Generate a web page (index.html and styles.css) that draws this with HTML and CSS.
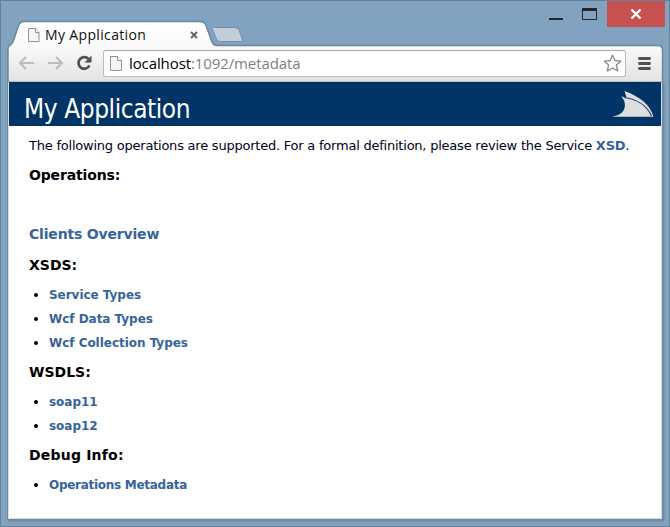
FILE: index.html
```html
<!DOCTYPE html>
<html lang="en">
<head>
<meta charset="utf-8">
<title>My Application</title>
<link rel="stylesheet" href="styles.css">
</head>
<body>
<div class="window">
  <header class="chrome">
    <svg class="frame" width="670" height="82" viewBox="0 0 670 82">
      <defs>
        <linearGradient id="bar" x1="0" y1="22" x2="0" y2="81" gradientUnits="userSpaceOnUse">
          <stop offset="0" stop-color="#fff"/><stop offset=".4" stop-color="#fafafa"/><stop offset="1" stop-color="#e3e3e3"/>
        </linearGradient>
      </defs>
      <path d="M8 82V49Q8 45.500 11 44.500Q12.500 43.500 13.500 40.500L18.500 26Q20 21.500 24 21.500H200Q204.500 21.500 206 25.500L212 42Q213.300 45.500 217 45.500H658Q662.500 45.500 662.500 50V82Z" fill="url(#bar)" stroke="#66869f" stroke-width="1.400"/>
      <path d="M9 81.500H661" stroke="#bdbdbd"/>
      <path d="M213.500 27.500H235Q238 27.500 239 30L242.300 39Q243 41.500 240.500 41.500H220Q217.500 41.500 216.500 39L212.300 29Q211.800 27.500 213.500 27.500Z" fill="#c1ced9" stroke="#7892a8"/>
    </svg>
    <div class="bars">
      <div class="titlebar">
        <div class="tab">
          <svg width="12" height="15" viewBox="0 0 12 15"><path d="M.5.5H7.500L11 4.500V13.500H.5Z" fill="#f5f5f5" stroke="#929292"/><path d="M7.500.5V4.500H11" fill="#fff" stroke="#929292"/></svg>
          <span class="tab-title">My Application</span>
          <svg class="tab-close" width="8" height="8" viewBox="0 0 8 8"><path d="M1 1L7 7M7 1L1 7" stroke="#626262" stroke-width="1.800"/></svg>
        </div>
        <div class="controls">
          <svg width="56" height="26" viewBox="0 0 56 26"><path d="M5 17H19V19H5Z" fill="#262626"/><path d="M38.500 8.500H52.500V18.500H38.500Z" fill="none" stroke="#262626"/><path d="M38 7H53V10H38Z" fill="#262626"/></svg>
          <div class="close"><svg width="12" height="10" viewBox="0 0 12 10"><path d="M1.500.5L10.500 9.500M10.500.5L1.500 9.500" stroke="#fff" stroke-width="2.300"/></svg></div>
        </div>
      </div>
      <div class="toolbar">
        <svg class="nav" width="80" height="20" viewBox="0 0 80 20">
          <path d="M16 10H2M8 4L2 10L8 16" fill="none" stroke="#bdbdbd" stroke-width="2.200"/>
          <path d="M30 10H44M38 4L44 10L38 16" fill="none" stroke="#bdbdbd" stroke-width="2.200"/>
          <path d="M70.500 5.900A5.800 5.800 0 1 0 71.500 12.500" fill="none" stroke="#505050" stroke-width="2.700"/>
          <path d="M73.500 2.500V9.500H66.500Z" fill="#505050"/>
        </svg>
        <div class="address">
          <svg width="12" height="15" viewBox="0 0 12 15"><path d="M.5.5H7.500L11.500 4.500V14.500H.5Z" fill="#f5f5f5" stroke="#929292"/><path d="M7.500.5V4.500H11.500" fill="#fff" stroke="#929292"/></svg>
          <span class="url">localhost<span>:1092/metadata</span></span>
          <svg class="star" width="20" height="19" viewBox="0 0 20 19"><path d="M9.500 1.200L11.900 6.500L17.700 7.200L13.400 11L14.700 16.900L9.500 14L4.300 16.900L5.600 11L1.300 7.200L7.100 6.500Z" fill="#fff" stroke="#8a8a8a" stroke-width="1.300" stroke-linejoin="round"/></svg>
        </div>
        <svg class="menu" width="13" height="13" viewBox="0 0 13 13"><path d="M1.500 1.500H11.500M1.500 6.500H11.500M1.500 11.500H11.500" stroke="#515151" stroke-width="2.900" stroke-linecap="round"/></svg>
      </div>
    </div>
  </header>
  <main class="page">
    <div class="banner">
      <h1>My Application</h1>
      <svg width="42" height="27" viewBox="0 0 42 27"><path d="M0 25.700C5 24.800 10 23 12 18.500C13.800 14.500 13 9.500 9.300 5.500L14.500 6.500L12.500 0C29 6 38 14 41.500 25.700Z" fill="#dedede"/><path d="M12 6.500C25 8 35 15 39.500 25" fill="none" stroke="#174371" stroke-width="1.100"/></svg>
    </div>
    <div class="content">
      <p>The following operations are supported. For a formal definition, please review the Service <a>XSD</a>.</p>
      <h2 class="operations">Operations:</h2>
      <h2 class="clients"><a>Clients Overview</a></h2>
      <h2>XSDS:</h2>
      <ul><li><a>Service Types</a></li><li><a>Wcf Data Types</a></li><li><a>Wcf Collection Types</a></li></ul>
      <h2>WSDLS:</h2>
      <ul><li><a>soap11</a></li><li><a>soap12</a></li></ul>
      <h2 class="debug">Debug Info:</h2>
      <ul class="metadata"><li><a>Operations Metadata</a></li></ul>
    </div>
  </main>
</div>
</body>
</html>
```
FILE: styles.css
```css
* { box-sizing: border-box; }
body { margin: 0; overflow: hidden; }
svg { display: block; flex: none; }
.window {
  width: 670px;
  height: 527px;
  background: #81a3bf;
  box-shadow: inset 0 0 0 1px #66829a;
}
.chrome { display: grid; height: 82px; }
.frame, .bars { grid-area: 1 / 1; }
.titlebar { height: 46px; display: flex; justify-content: space-between; }
.tab {
  width: 172px;
  margin: 25px 0 0 28px;
  height: 20px;
  display: flex;
  align-items: center;
}
.tab-title {
  margin-left: 5px;
  font: 14px/20px "Open Sans", sans-serif;
  letter-spacing: .35px;
  color: #111;
  white-space: nowrap;
}
.tab-close { margin-left: auto; margin-right: 2px; }
.controls { display: flex; margin: 1px 5px 0 0; height: 26px; }
.controls > svg { margin-right: 7px; }
.close {
  width: 58px;
  background: #c75050;
  display: grid;
  place-items: center;
}
.toolbar { height: 36px; display: flex; align-items: flex-start; padding-left: 18px; }
.nav { margin-top: 7px; }
.address {
  margin: 4px 0 0 5px;
  width: 523px;
  height: 27px;
  border: 1px solid #bcbcbc;
  border-top-color: #a9a9a9;
  border-radius: 3px;
  background: #fff;
  display: flex;
  align-items: center;
  padding-left: 6px;
}
.url {
  margin: -1px 0 0 7px;
  font: 15px/24px "Open Sans", sans-serif;
  letter-spacing: -.1px;
  color: #000;
  white-space: nowrap;
}
.url span { color: #808080; }
.star { margin-left: auto; margin-right: 2px; }
.menu { margin: 11px 0 0 12px; }
.page {
  width: 654px;
  height: 437px;
  margin-left: 8px;
  border: solid #d9dde0;
  border-width: 0 1px 1px;
  background: #fff;
  box-shadow: 0 0 0 1px #6c8aa2, 1px 1px 2px 1px #6583a0;
  clip-path: inset(0 -4px -4px -4px);
}
.banner {
  height: 44px;
  background: #036;
  display: flex;
  justify-content: space-between;
  padding: 9px 7px 0 15px;
}
h1 {
  margin: 0;
  font: 26px/36px "DejaVu Sans Condensed", Tahoma, sans-serif;
  letter-spacing: -.43px;
  color: #fff;
  white-space: nowrap;
}
.content {
  padding: 11px 0 0 20px;
  font: 13px/18px "DejaVu Sans", Verdana, sans-serif;
  color: #000;
}
p { margin: 0; white-space: nowrap; color: #002; letter-spacing: -.225px; }
h2 { margin: 11px 0 8px; font-size: 14px; line-height: 20px; font-weight: bold; }
.operations { margin: 10px 0 39px; letter-spacing: -.15px; }
.clients { margin-bottom: 11px; letter-spacing: -.18px; }
.debug { letter-spacing: .2px; }
a { color: #36639a; font-weight: bold; }
ul { margin: 0; padding-left: 20px; }
ul + h2 { margin-top: 7px; }
li { line-height: 24px; }
li a { font-size: 12px; letter-spacing: -.03px; }
.metadata a { letter-spacing: -.28px; }
```
